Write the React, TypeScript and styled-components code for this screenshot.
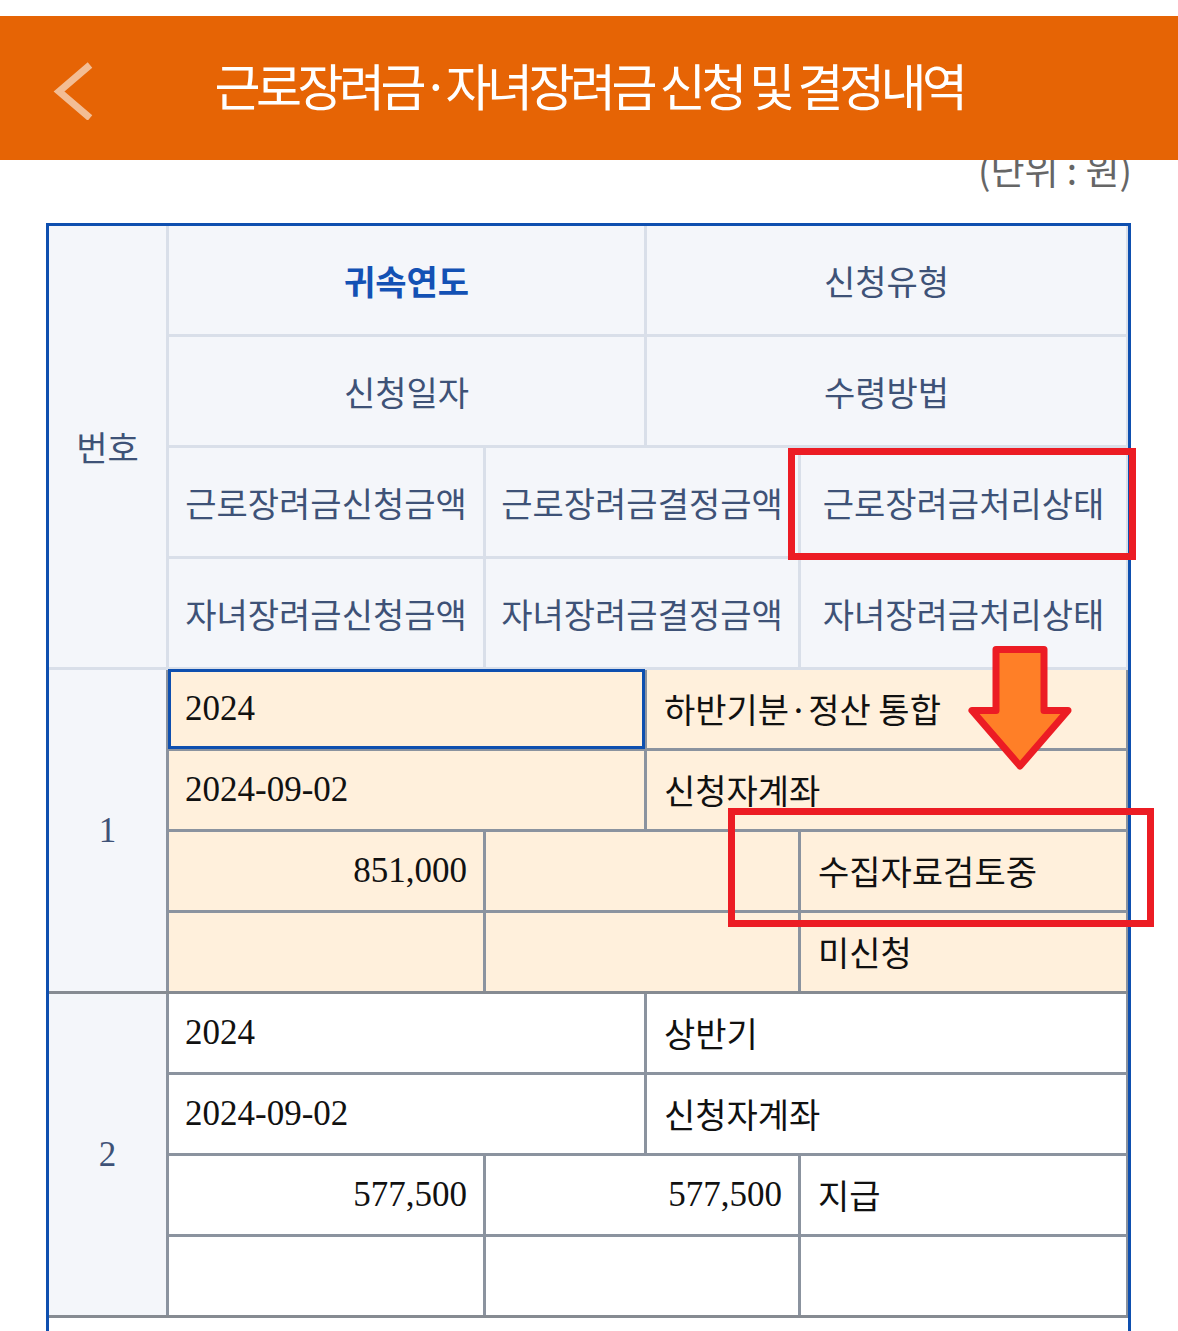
import React from 'react'
import styled, { createGlobalStyle } from 'styled-components'

const SANS = `"Noto Sans CJK KR", "Noto Sans", sans-serif`
const SERIF = `"Liberation Serif", "Noto Sans CJK KR", serif`

const GlobalStyle = createGlobalStyle`
  body {
    margin: 0;
    background: #fff;
    font-family: ${SANS};
  }
`

const Page = styled.div`
  padding-top: 16px;
  width: 1178px;
`

const TopBar = styled.header`
  position: relative;
  z-index: 2;
  height: 144px;
  background: #e66405;
  display: grid;
  grid-template-columns: 1fr auto 1fr;
  align-items: center;
`

const BackButton = styled.button`
  justify-self: start;
  margin-left: 50px;
  width: 48px;
  height: 64px;
  padding: 0;
  border: 0;
  background: none;
  display: flex;
`

const Title = styled.h1`
  margin: 0;
  padding-bottom: 9px;
  color: #fff;
  font-size: 50px;
  font-weight: 400;
  letter-spacing: -4.5px;
  line-height: 1;
  white-space: nowrap;
`

const UnitRow = styled.div`
  margin-top: -12px;
  padding-right: 46px;
  text-align: right;
  font-size: 37px;
  line-height: 42px;
  color: #666;
`

const TableWrap = styled.div`
  position: relative;
  margin: 33px 0 0 46px;
  width: 1085px;
`

const Table = styled.div`
  border: 3px solid #0e4faf;
  border-bottom: none;
  background: #fff;
`

const Group = styled.div<{ $line: string; $end: string }>`
  display: grid;
  grid-template-columns: 117px 1fr;
  column-gap: 3px;
  padding-right: 2px;
  background: ${p => p.$line};
  border-bottom: 3px solid ${p => p.$end};
`

const NumCell = styled.div<{ $serif?: boolean }>`
  background: #f4f6fa;
  display: flex;
  align-items: center;
  justify-content: center;
  color: #3e5277;
  font-family: ${p => (p.$serif ? SERIF : SANS)};
  font-size: ${p => (p.$serif ? 35 : 34)}px;
`

const Rows = styled.div`
  display: grid;
  row-gap: 3px;
`

const Row = styled.div<{ $cols: number }>`
  display: grid;
  grid-template-columns: ${p => (p.$cols === 2 ? '475px 1fr' : '314px 312px 1fr')};
  column-gap: 3px;
`

const HeadCell = styled.div<{ $strong?: boolean }>`
  height: 108px;
  background: #f4f6fa;
  display: flex;
  align-items: center;
  justify-content: center;
  font-size: 34px;
  white-space: nowrap;
  color: ${p => (p.$strong ? '#1351b4' : '#3e5277')};
  font-weight: ${p => (p.$strong ? 700 : 400)};
`

const DataCell = styled.div<{ $tone: string; $right?: boolean; $serif?: boolean; $selected?: boolean }>`
  position: relative;
  height: 78px;
  background: ${p => p.$tone};
  display: flex;
  align-items: center;
  justify-content: ${p => (p.$right ? 'flex-end' : 'flex-start')};
  padding: 0 16px 0 ${p => (p.$serif ? 16 : 17)}px;
  color: #111;
  font-family: ${p => (p.$serif ? SERIF : SANS)};
  font-size: ${p => (p.$serif ? 35 : 34)}px;
  line-height: 1.2;
  white-space: nowrap;
  ${p => p.$selected && 'z-index: 1; outline: 3px solid #0e4faf; outline-offset: -2px;'}
`

const Tail = styled.div`
  height: 40px;
`

const RedBox = styled.div<{ $x: number; $y: number; $w: number; $h: number }>`
  position: absolute;
  left: ${p => p.$x}px;
  top: ${p => p.$y}px;
  width: ${p => p.$w}px;
  height: ${p => p.$h}px;
  box-sizing: border-box;
  border: 7px solid #ec1c24;
  pointer-events: none;
  z-index: 3;
`

const Arrow = styled.svg`
  position: absolute;
  left: 914px;
  top: 413px;
  z-index: 3;
  pointer-events: none;
`

const headRows = [
  [{ t: '귀속연도', strong: true }, { t: '신청유형' }],
  [{ t: '신청일자' }, { t: '수령방법' }],
  [{ t: '근로장려금신청금액' }, { t: '근로장려금결정금액' }, { t: '근로장려금처리상태' }],
  [{ t: '자녀장려금신청금액' }, { t: '자녀장려금결정금액' }, { t: '자녀장려금처리상태' }],
]

const groups = [
  {
    no: '1',
    tone: '#fff0dc',
    rows: [
      ['2024', '하반기분·정산 통합'],
      ['2024-09-02', '신청자계좌'],
      ['851,000', '', '수집자료검토중'],
      ['', '', '미신청'],
    ],
  },
  {
    no: '2',
    tone: '#fff',
    rows: [
      ['2024', '상반기'],
      ['2024-09-02', '신청자계좌'],
      ['577,500', '577,500', '지급'],
      ['', '', ''],
    ],
  },
]

const isNumeric = (s: string) => /^[\d,\-]+$/.test(s)

const App = () => (
  <Page>
    <GlobalStyle />
    <TopBar>
      <BackButton aria-label="뒤로">
        <svg width="48" height="64" viewBox="0 0 48 64">
          <polyline points="40,9 9,35.5 40,62" fill="none" stroke="#f3bd94" strokeWidth="7" />
        </svg>
      </BackButton>
      <Title>근로장려금·자녀장려금 신청 및 결정내역</Title>
      <span />
    </TopBar>
    <UnitRow>(단위 : 원)</UnitRow>
    <TableWrap>
      <Table>
        <Group $line="#d9dfe9" $end="#d9dfe9">
          <NumCell>번호</NumCell>
          <Rows>
            {headRows.map((row, i) => (
              <Row key={i} $cols={row.length}>
                {row.map((c, j) => (
                  <HeadCell key={j} $strong={'strong' in c}>
                    {c.t}
                  </HeadCell>
                ))}
              </Row>
            ))}
          </Rows>
        </Group>
        {groups.map((g, gi) => (
          <Group key={g.no} $line="#8b939f" $end="#868b92">
            <NumCell $serif>{g.no}</NumCell>
            <Rows>
              {g.rows.map((row, i) => (
                <Row key={i} $cols={row.length}>
                  {row.map((v, j) => (
                    <DataCell
                      key={j}
                      $tone={g.tone}
                      $serif={isNumeric(v)}
                      $right={row.length === 3 && j < 2}
                      $selected={gi === 0 && i === 0 && j === 0}
                    >
                      {v}
                    </DataCell>
                  ))}
                </Row>
              ))}
            </Rows>
          </Group>
        ))}
        <Tail />
      </Table>
      <RedBox $x={742} $y={225} $w={348} $h={112} />
      <RedBox $x={682} $y={585} $w={426} $h={119} />
      <Arrow width="124" height="146" viewBox="0 0 124 146">
        <polygon
          points="36,13.5 84,13.5 84,74.5 108,74.5 60,130 12,74.5 36,74.5"
          fill="#ff7f27"
          stroke="#ec1c24"
          strokeWidth="7"
          strokeLinejoin="round"
        />
      </Arrow>
    </TableWrap>
  </Page>
)

export default App
